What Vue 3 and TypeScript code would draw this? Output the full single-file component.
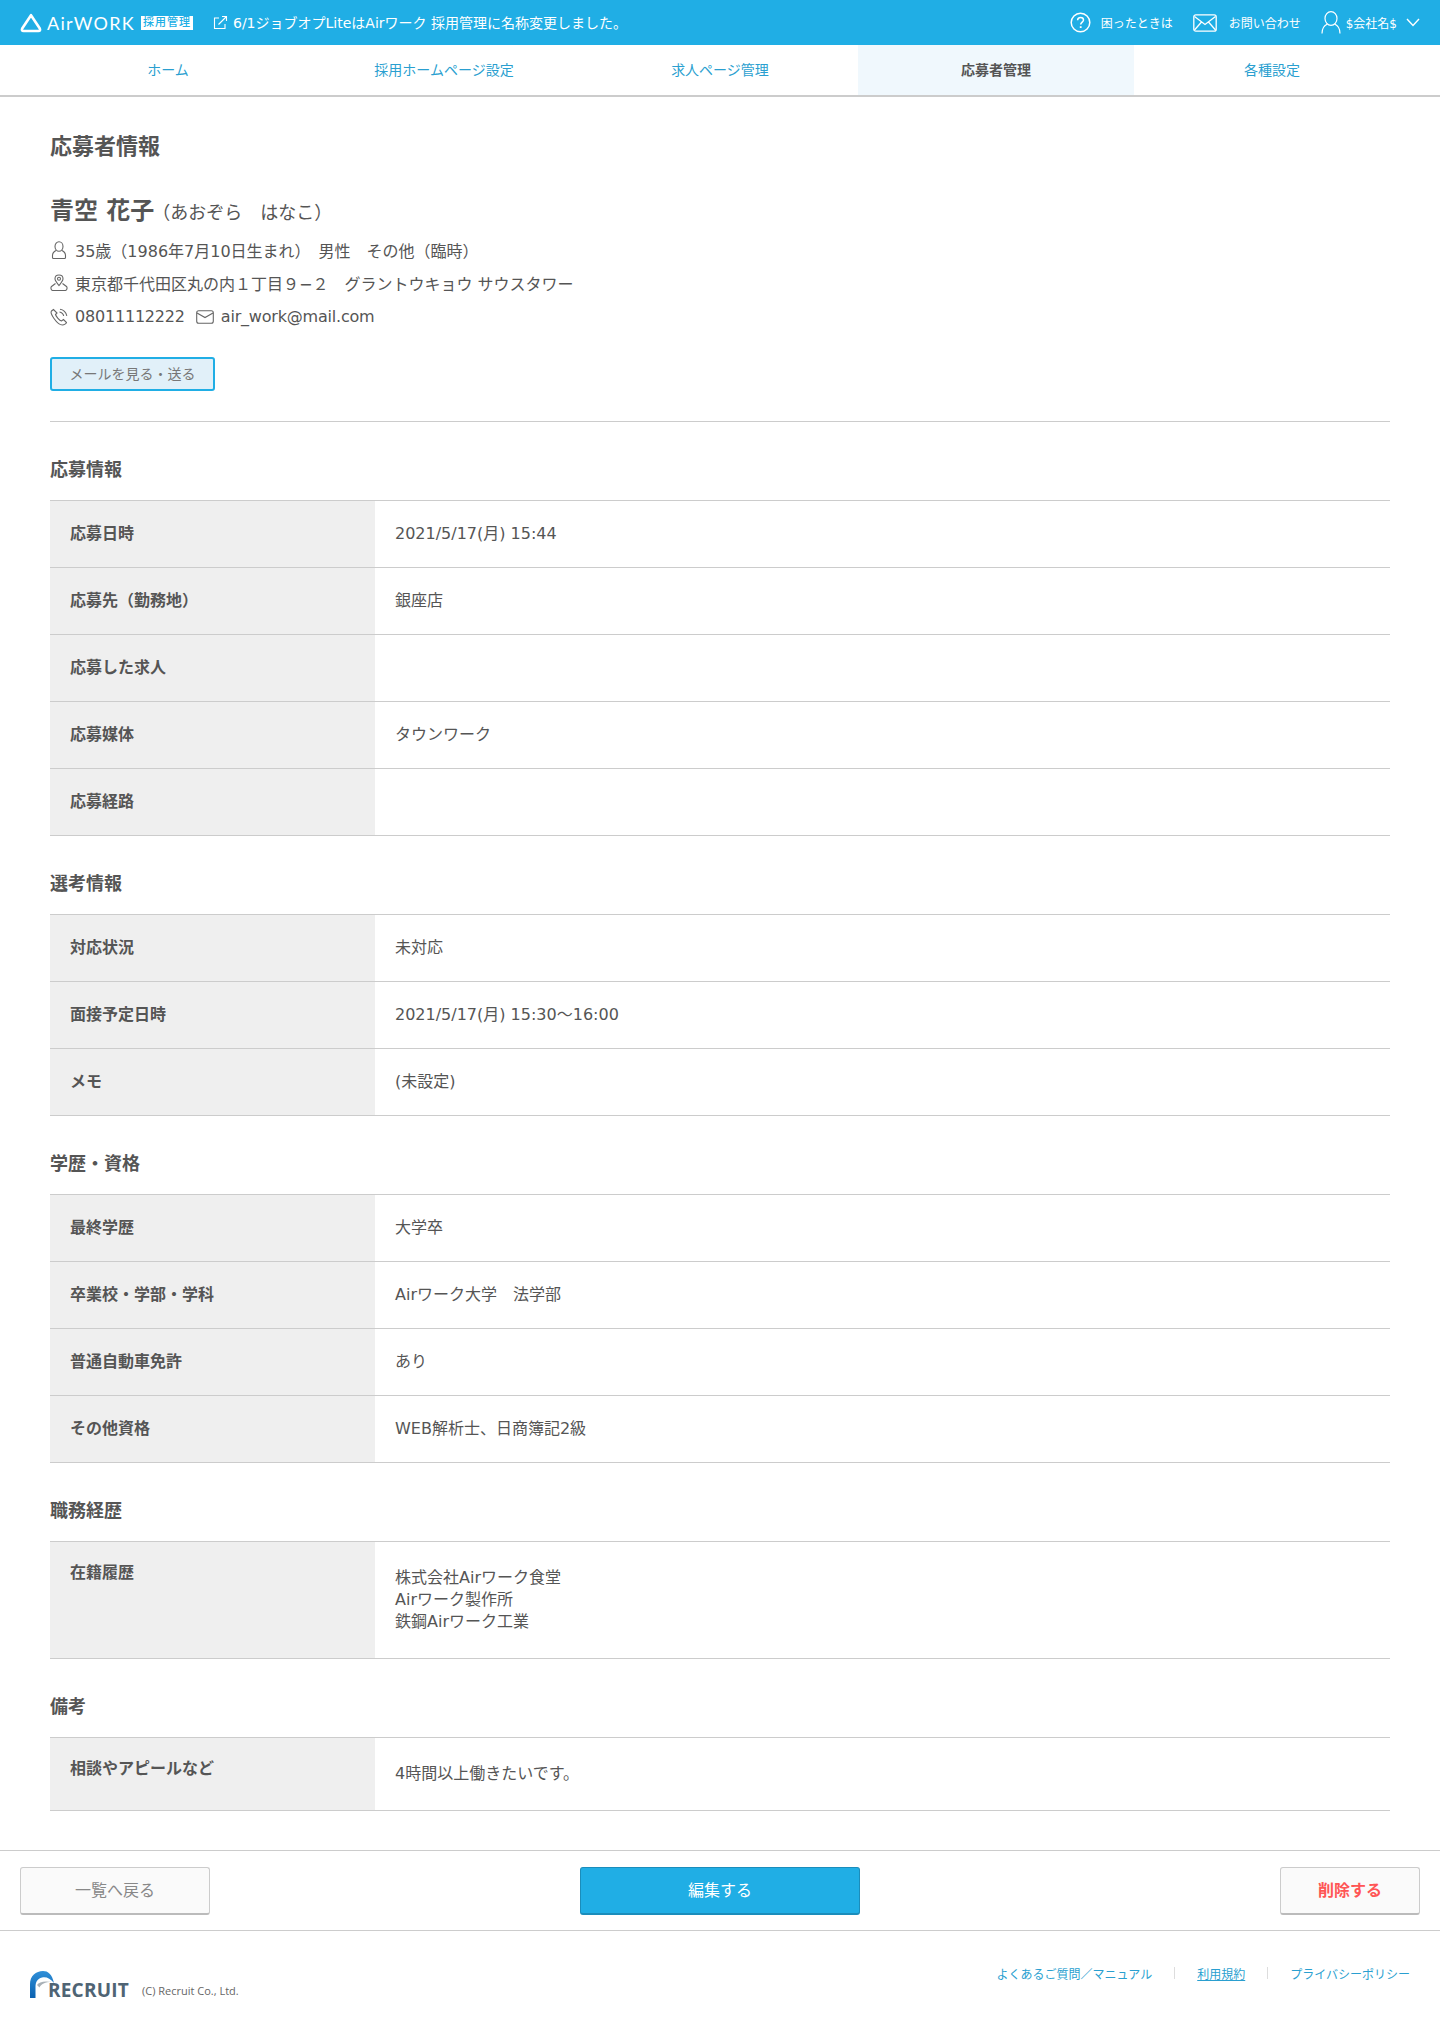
<script setup lang="ts">
interface Row { label: string; lines: string[] }
interface Section { title: string; rows: Row[]; tall?: string }

const navItems = ['ホーム', '採用ホームページ設定', '求人ページ管理', '応募者管理', '各種設定']

const sections: Section[] = [
  {
    title: '応募情報',
    rows: [
      { label: '応募日時', lines: ['2021/5/17(月) 15:44'] },
      { label: '応募先（勤務地）', lines: ['銀座店'] },
      { label: '応募した求人', lines: [] },
      { label: '応募媒体', lines: ['タウンワーク'] },
      { label: '応募経路', lines: [] }
    ]
  },
  {
    title: '選考情報',
    rows: [
      { label: '対応状況', lines: ['未対応'] },
      { label: '面接予定日時', lines: ['2021/5/17(月) 15:30〜16:00'] },
      { label: 'メモ', lines: ['(未設定)'] }
    ]
  },
  {
    title: '学歴・資格',
    rows: [
      { label: '最終学歴', lines: ['大学卒'] },
      { label: '卒業校・学部・学科', lines: ['Airワーク大学　法学部'] },
      { label: '普通自動車免許', lines: ['あり'] },
      { label: 'その他資格', lines: ['WEB解析士、日商簿記2級'] }
    ]
  },
  {
    title: '職務経歴',
    tall: 'career',
    rows: [
      { label: '在籍履歴', lines: ['株式会社Airワーク食堂', 'Airワーク製作所', '鉄鋼Airワーク工業'] }
    ]
  },
  {
    title: '備考',
    tall: 'note',
    rows: [
      { label: '相談やアピールなど', lines: ['4時間以上働きたいです。'] }
    ]
  }
]
</script>

<template>
  <div class="page">
    <header class="topbar">
      <div class="brand">
        <svg class="brand-mark" width="22" height="20" viewBox="0 0 22 20" fill="none">
          <path d="M11 2.2 L19.8 15.5 Q20.8 18 18.4 18 H3.6 Q1.2 18 2.2 15.5 Z" stroke="#fff" stroke-width="2.6" stroke-linejoin="round" />
        </svg>
        <span class="brand-name">AirWORK</span>
        <span class="brand-tag">採用管理</span>
      </div>
      <div class="notice">
        <svg width="15" height="15" viewBox="0 0 15 15" fill="none" stroke="#fff" stroke-width="1.1">
          <path d="M6 3H1.5V13.5H12V9" />
          <path d="M5.5 9.5 13.5 1.5M9 1.5H13.5V6" />
        </svg>
        <span>6/1ジョブオプLiteはAirワーク 採用管理に名称変更しました。</span>
      </div>
      <div class="top-links">
        <a class="top-link help">
          <svg width="21" height="21" viewBox="0 0 21 21" fill="none" stroke="#fff" stroke-width="1.5">
            <circle cx="10.5" cy="10.5" r="9.3" />
            <path d="M7.6 8.2C7.6 6.4 9 5.4 10.6 5.4 12.3 5.4 13.5 6.5 13.5 8 13.5 10 10.7 10.2 10.7 12.6" />
            <path d="M10.7 14.2V16" stroke-width="1.8" />
          </svg>
          <span>困ったときは</span>
        </a>
        <a class="top-link mail">
          <svg width="24" height="18" viewBox="0 0 24 18" fill="none" stroke="#fff" stroke-width="1.3">
            <rect x="0.8" y="0.8" width="22.4" height="16.4" rx="2" />
            <path d="M1.5 2.5 12 10.5 22.5 2.5M1.5 16 8.5 8M22.5 16 15.5 8" />
          </svg>
          <span>お問い合わせ</span>
        </a>
        <a class="top-link user">
          <svg width="20" height="23" viewBox="0 0 20 23" fill="none" stroke="#fff" stroke-width="1.2">
            <ellipse cx="10" cy="7.5" rx="6" ry="6.8" />
            <path d="M6.5 13C3 14.5 1 17.5 1 22.5M13.5 13C17 14.5 19 17.5 19 22.5" />
          </svg>
          <span>$会社名$</span>
          <svg class="chevron" width="14" height="9" viewBox="0 0 14 9" fill="none" stroke="#fff" stroke-width="1.4">
            <path d="M1 1 7 7.5 13 1" />
          </svg>
        </a>
      </div>
    </header>

    <nav class="nav">
      <a v-for="item in navItems" :key="item" class="nav-item" :class="{ active: item === '応募者管理' }">{{ item }}</a>
    </nav>

    <main class="content">
      <h1 class="page-title">応募者情報</h1>

      <div class="profile">
        <div class="name-row">
          <span class="name">青空 花子</span>
          <span class="kana">（あおぞら　はなこ）</span>
        </div>
        <div class="info-row">
          <svg class="info-icon" width="18" height="18" viewBox="0 0 18 18" fill="none" stroke="#666" stroke-width="1.1">
            <ellipse cx="9" cy="5.5" rx="4" ry="4.7" />
            <path d="M6 9.5C4 10.5 2.5 12 2.5 14.5V16.5C2.5 17 3 17.5 3.5 17.5H14.5C15 17.5 15.5 17 15.5 16.5V14.5C15.5 12 14 10.5 12 9.5" />
          </svg>
          <span>35歳（1986年7月10日生まれ）　男性　その他（臨時）</span>
        </div>
        <div class="info-row">
          <svg class="info-icon" width="18" height="18" viewBox="0 0 18 18" fill="none" stroke="#666" stroke-width="1.1">
            <path d="M9 11.5C7 9 5 7 5 4.8 5 2.6 6.8 1 9 1 11.2 1 13 2.6 13 4.8 13 7 11 9 9 11.5Z" />
            <circle cx="9" cy="4.8" r="1.5" />
            <path d="M5.5 9.5 1.5 12.5C.6 13.2.7 16 2.5 16.5H15.5C17.3 16 17.4 13.2 16.5 12.5L12.5 9.5" />
          </svg>
          <span>東京都千代田区丸の内１丁目９−２　グラントウキョウ サウスタワー</span>
        </div>
        <div class="info-row contact">
          <svg class="info-icon" width="18" height="18" viewBox="0 0 18 18" fill="none" stroke="#666" stroke-width="1.1">
            <path d="M3.5 1.5 1.5 3C.6 4 1.5 7 4 10.5 6.8 14.5 10.5 17 12.5 17 14 17 16.5 15.5 16.5 14.5L13.5 11.5 11.5 13C9.5 12.5 6 8.5 5.5 6.5L7 5Z" />
            <path d="M9.5 4C11.5 4.3 13.3 6 13.7 8M10 1.2C13.3 1.5 16.3 4.3 16.8 7.8" />
          </svg>
          <span class="tight">08011112222</span>
          <svg class="info-icon mail-icon" width="18" height="14" viewBox="0 0 18 14" fill="none" stroke="#666" stroke-width="1.1">
            <rect x="0.7" y="0.7" width="16.6" height="12.6" rx="2" />
            <path d="M1 3 9 7.5 17 3" />
          </svg>
          <span class="tight">air_work@mail.com</span>
        </div>
        <button class="mail-btn" type="button">メールを見る・送る</button>
      </div>

      <section v-for="s in sections" :key="s.title" class="section">
        <h2 class="section-title">{{ s.title }}</h2>
        <div class="table" :class="s.tall">
          <div v-for="r in s.rows" :key="r.label" class="row">
            <div class="row-label">{{ r.label }}</div>
            <div class="row-value">
              <div v-for="line in r.lines" :key="line">{{ line }}</div>
            </div>
          </div>
        </div>
      </section>
    </main>

    <div class="actions">
      <button class="btn btn-back" type="button">一覧へ戻る</button>
      <button class="btn btn-edit" type="button">編集する</button>
      <button class="btn btn-delete" type="button">削除する</button>
    </div>

    <footer class="footer">
      <div class="recruit">
        <div class="recruit-logo">
          <svg class="recruit-arc" width="24" height="27" viewBox="0 0 24 27">
            <defs>
              <linearGradient id="arcBlue" x1="0" y1="0" x2="0" y2="1">
                <stop offset="0" stop-color="#2f8fd8" />
                <stop offset="1" stop-color="#0b62b0" />
              </linearGradient>
            </defs>
            <path d="M0 27V13C0 5 6 0 13 0 18 0 22 3 24 12 20 7 16 5.5 12 6.5 7.5 7.5 5.5 11 5.5 16V27Z" fill="url(#arcBlue)" />
            <path d="M7 14C9 11 14 9.5 22 11 15 11 11 13 9.5 16.5Z" fill="#a9b1b7" />
          </svg>
          <span class="recruit-name">RECRUIT</span>
        </div>
        <span class="copyright">(C) Recruit Co., Ltd.</span>
      </div>
      <div class="footer-links">
        <a>よくあるご質問／マニュアル</a>
        <i class="sep" />
        <a class="underlined">利用規約</a>
        <i class="sep" />
        <a>プライバシーポリシー</a>
      </div>
    </footer>
  </div>
</template>

<style>
html, body { margin: 0; background: #fff; }
</style>

<style scoped>
.page {
  width: 1440px;
  height: 2020px;
  overflow: hidden;
  font-family: "DejaVu Sans", "Noto Sans CJK JP", sans-serif;
  color: #555;
  background: #fff;
}

.topbar { height: 45px; background: #20aee5; color: #fff; display: flex; align-items: center; padding: 0 20px; box-sizing: border-box; }
.brand { display: flex; align-items: center; }
.brand-mark { margin-right: 5px; }
.brand-name { font-family: "Lato", sans-serif; font-size: 18px; letter-spacing: 1.3px; line-height: 1; }
.brand-tag { margin-left: 6px; background: #fff; color: #20aee5; font-size: 11px; font-weight: 500; line-height: 14px; padding: 0 2px; letter-spacing: 1px; }
.notice { display: flex; align-items: center; gap: 5px; margin-left: 20px; font-size: 14px; margin-top: -1px; }
.top-links { margin-left: auto; display: flex; align-items: center; }
.top-link { display: flex; align-items: center; font-size: 12px; }
.help span { margin-left: 10px; }
.mail { margin-left: 20px; }
.mail span { margin-left: 12px; }
.user { margin-left: 20px; }
.user span { margin-left: 5px; }
.chevron { margin-left: 9px; margin-right: 0; }

.nav { height: 52px; border-bottom: 2px solid #ccc; box-sizing: border-box; display: grid; grid-template-columns: repeat(5, 276px); padding: 0 30px; }
.nav-item { display: flex; align-items: center; justify-content: center; font-size: 14px; color: #2a9fd0; padding-bottom: 2px; }
.nav-item.active { background: #f0f8fd; color: #555; font-weight: 700; }

.content { padding: 0 50px; }
.page-title { margin: 0; padding-top: 34px; font-size: 22px; line-height: 32px; font-weight: 700; color: #555; }

.profile { margin-top: 30px; height: 228px; border-bottom: 1px solid #ccc; box-sizing: content-box; }
.name-row { display: flex; align-items: baseline; height: 36px; line-height: 36px; }
.name { font-size: 24px; font-weight: 700; }
.kana { font-size: 18px; margin-left: -2px; }
.info-row { display: flex; align-items: center; height: 33px; font-size: 16px; box-sizing: border-box; }
.name-row + .info-row { margin-top: 4px; }
.contact { padding-top: 2px; }
.tight { letter-spacing: -0.2px; }
.info-icon { margin-right: 7px; flex-shrink: 0; }
.mail-icon { margin-left: 11px; margin-right: 7px; }
.mail-btn { display: block; margin-top: 25px; width: 165px; height: 34px; box-sizing: border-box; border: 2px solid #20aee5; border-radius: 3px; background: #e1f0f9; color: #777; font-family: inherit; font-size: 14px; padding: 0 0 2px; }

.section-title { margin: 0; height: 78px; padding-top: 32px; box-sizing: border-box; line-height: 32px; font-size: 18px; font-weight: 700; color: #555; }
.table { border-top: 1px solid #ccc; }
.row { display: grid; grid-template-columns: 325px 1fr; height: 67px; box-sizing: border-box; border-bottom: 1px solid #ccc; font-size: 16px; }
.row-label { background: #efefef; padding: 0 0 4px 20px; display: flex; align-items: center; font-size: 16px; font-weight: 700; }
.row-value { padding: 0 0 1px 20px; display: flex; flex-direction: column; justify-content: center; line-height: 22px; }
.career .row { height: 117px; }
.career .row-label { align-items: flex-start; padding-top: 20px; line-height: 22px; }
.note .row { height: 73px; }
.note .row-label { align-items: flex-start; padding-top: 20px; line-height: 22px; }

.actions { margin-top: 39px; height: 81px; border-top: 1px solid #ccc; border-bottom: 1px solid #ccc; box-sizing: border-box; display: grid; grid-template-columns: 1fr auto 1fr; align-items: center; padding: 0 20px; }
.btn { height: 48px; box-sizing: border-box; border-radius: 3px; font-family: inherit; font-size: 16px; padding: 0 0 2px; }
.btn-back { width: 190px; border: 1px solid #ccc; border-bottom-width: 2px; border-bottom-color: #bbb; background: #fafafa; color: #888; }
.btn-edit { width: 280px; border: 1px solid #1b8dbb; border-bottom-width: 2px; background: #20aee5; color: #fff; }
.btn-delete { width: 140px; justify-self: end; border: 1px solid #ccc; border-bottom-width: 2px; border-bottom-color: #bbb; background: #fafafa; color: #f55; font-weight: 700; }

.footer { display: flex; justify-content: space-between; padding: 40px 30px 0; }
.recruit { display: flex; align-items: flex-end; }
.recruit-logo { position: relative; width: 100px; height: 27px; }
.recruit-arc { display: block; }
.recruit-name { position: absolute; left: 18px; bottom: -1px; font-family: "Open Sans", sans-serif; font-size: 19px; line-height: 18px; font-weight: 700; color: #4f6474; letter-spacing: 0.2px; }
.copyright { margin-left: 12px; font-family: "Open Sans", sans-serif; font-size: 11px; color: #666; line-height: 14px; }
.footer-links { display: flex; align-items: center; font-size: 12px; color: #2a9fd0; height: 18px; margin-top: -7px; }
.underlined { text-decoration: underline; }
.sep { width: 1px; height: 12px; background: #ddd; margin: 0 22px; }
</style>
